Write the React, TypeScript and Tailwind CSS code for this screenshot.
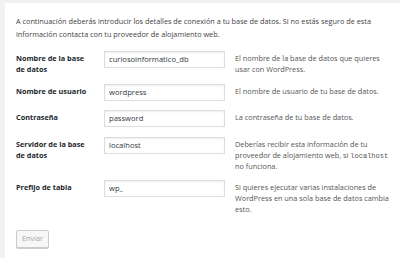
import React from 'react';

type Row = {
    label: React.ReactNode;
    value: string;
    help: React.ReactNode;
    h: string;
};

const rows: Row[] = [
    {
        label: <>Nombre de la base<br />de datos</>,
        value: 'curiosoinformatico_db',
        help: <>El nombre de la base de datos que quieres usar con WordPress.</>,
        h: 'h-[33px]',
    },
    {
        label: 'Nombre de usuario',
        value: 'wordpress',
        help: 'El nombre de usuario de tu base de datos.',
        h: 'h-[26px]',
    },
    {
        label: 'Contraseña',
        value: 'password',
        help: 'La contraseña de tu base de datos.',
        h: 'h-[27px]',
    },
    {
        label: <>Servidor de la base<br />de datos</>,
        value: 'localhost',
        help: (
            <>
                Deberías recibir esta información de tu proveedor de alojamiento web, si{' '}
                <code className="font-['Liberation_Mono',monospace] text-[7px] leading-none">localhost</code> no funciona.
            </>
        ),
        h: 'h-[43px]',
    },
    {
        label: 'Prefijo de tabla',
        value: 'wp_',
        help: 'Si quieres ejecutar varias instalaciones de WordPress en una sola base de datos cambia esto.',
        h: 'h-[48px]',
    },
];

export default function App() {
    return (
        <div className="w-[400px] h-[258px] bg-[#f1f1f1] pl-[5px] pt-[3px] overflow-hidden font-['Open_Sans',sans-serif]">
            <div className="bg-white h-full pl-[11px] pt-[12px] text-[7.3px] leading-[11px] text-[#444]">
                <p className="leading-[13px] pr-[15px]">
                    A continuación deberás introducir los detalles de conexión a tu base de datos. Si no estás seguro de esta
                    información contacta con tu proveedor de alojamiento web.
                </p>

                <div className="mt-[10px] flex flex-col">
                    {rows.map((r, i) => (
                        <div key={i} className={`flex ${r.h}`}>
                            <div className="w-[88px] pt-[2px] font-bold text-[#23282d]">{r.label}</div>
                            <div className="w-[131px]">
                                <div className="w-[121px] h-[17px] border border-[#ddd] shadow-[inset_0_1px_2px_rgba(0,0,0,0.07)] px-[4px] flex items-center text-[#32373c] text-[7.6px]">
                                    {r.value}
                                </div>
                            </div>
                            <div className="w-[156px] pt-[2px] text-[#555]">{r.help}</div>
                        </div>
                    ))}
                </div>

                <button className="mt-[2px] h-[18px] px-[5px] border border-[#ccc] rounded-[2px] bg-[#f7f7f7] shadow-[0_1px_0_#ccc] text-[#a0a5aa] text-[7.3px] leading-none">
                    Enviar
                </button>
            </div>
        </div>
    );
}
